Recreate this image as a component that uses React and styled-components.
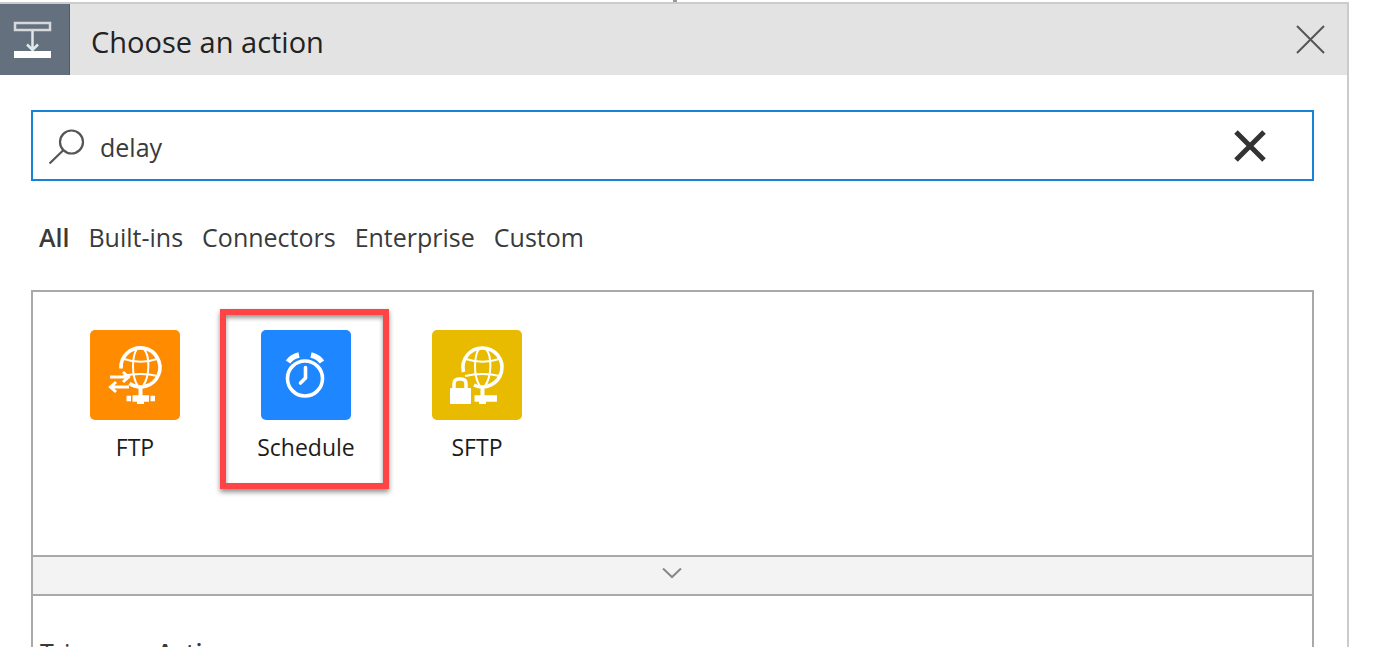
import React, { useState } from "react";
import styled, { createGlobalStyle } from "styled-components";

const GlobalStyle = createGlobalStyle`
  * { box-sizing: border-box; }
  body {
    margin: 0;
    height: 100vh;
    overflow: hidden;
    background: #fff;
    color: #3a3a3a;
    font-family: "Open Sans", "Noto Sans", sans-serif;
    font-size: 25px;
    line-height: 36px;
  }
  button, input { font: inherit; color: inherit; }
`;

const Page = styled.main`
  padding-right: 33px;
`;

const Connector = styled.div`
  width: 4px;
  height: 2px;
  margin: 0 auto;
  background: #999;
`;

const Card = styled.section`
  min-height: 100vh;
  border: solid #cbcbcb;
  border-width: 2px 2px 0 0;
`;

const Header = styled.header`
  display: flex;
  align-items: center;
  height: 71px;
  padding-right: 15px;
  background: #e3e3e3;
`;

const HeaderIcon = styled.div`
  width: 70px;
  height: 71px;
  flex: none;
  background: #64707d;
  border-right: 1px solid #535c66;
`;

const Title = styled.h1`
  flex: 1;
  margin: 0 0 0 21px;
  padding-top: 4px;
  color: #222;
  font-size: 29px;
  font-weight: 400;
  line-height: 40px;
`;

const IconButton = styled.button`
  display: grid;
  place-items: center;
  width: 44px;
  height: 44px;
  flex: none;
  padding: 0;
  border: 0;
  background: none;
  cursor: pointer;
`;

const Body = styled.div`
  padding: 35px 33px 0 31px;
`;

const SearchBox = styled.label`
  display: flex;
  align-items: center;
  height: 71px;
  padding: 0 40px 0 16px;
  border: 2px solid #1483d8;
`;

const SearchInput = styled.input`
  flex: 1;
  min-width: 0;
  height: 40px;
  margin: 2px 0 0 15px;
  padding: 0;
  border: 0;
  outline: 0;
  background: none;
`;

const Tabs = styled.nav`
  display: flex;
  gap: 19px;
  margin: 38px 0 35px;
  padding-left: 8px;
`;

const Tab = styled.button`
  padding: 0;
  border: 0;
  background: none;
  font-weight: ${(p) => (p.$active ? 600 : 400)};
  cursor: pointer;
`;

const Results = styled.div`
  border: 2px solid #a9a9a9;
  border-bottom: 0;
  min-height: 400px;
`;

const Tiles = styled.div`
  display: flex;
  gap: 1px;
  height: 263px;
  padding: 17px;
`;

const Tile = styled.button`
  position: relative;
  display: flex;
  flex-direction: column;
  align-items: center;
  gap: 9px;
  width: 170px;
  height: 180px;
  padding: 21px 0 0;
  border: 0;
  background: none;
  color: #1c1c1c;
  font-size: 23px;
  line-height: 36px;
  cursor: pointer;
`;

const TileIcon = styled.svg`
  width: 90px;
  height: 90px;
  flex: none;
  border-radius: 5px;
  background: ${(p) => p.$color};
`;

const Highlight = styled.span`
  position: absolute;
  inset: 0 2px 0 -1px;
  border: 6px solid #fe4444;
  box-shadow: 0 3px 5px rgba(0, 0, 0, 0.45), inset 0 3px 4px rgba(0, 0, 0, 0.4);
  pointer-events: none;
`;

const Expander = styled.button`
  display: grid;
  place-items: center;
  width: 100%;
  height: 41px;
  padding: 0 2px 5px 0;
  border: solid #a9a9a9;
  border-width: 2px 0;
  background: #f3f3f3;
  cursor: pointer;
`;

const KindTabs = styled.div`
  display: flex;
  gap: 23px;
  padding: 38px 0 0 7px;
`;

function StepGlyph() {
  return (
    <svg width="69" height="71" fill="none" aria-hidden="true">
      <rect x="15" y="19" width="35" height="7" stroke="#d5d9dd" strokeWidth="2.500" />
      <path d="M32.500 27V46M27 40.500L32.500 46L38 40.500" stroke="#e4e7ea" strokeWidth="2.500" />
      <rect x="14" y="47" width="37" height="7" fill="#fff" />
    </svg>
  );
}

function SearchGlyph() {
  return (
    <svg width="36" height="36" fill="none" stroke="#555" strokeWidth="2.200" aria-hidden="true">
      <circle cx="22.500" cy="14" r="11.500" />
      <path d="M14.500 22L0.500 35.500" />
    </svg>
  );
}

function Cross({ size, weight, color }) {
  return (
    <svg width={size} height={size} stroke={color} strokeWidth={weight} aria-hidden="true">
      <path d={`M2 2L${size - 2} ${size - 2}M${size - 2} 2L2 ${size - 2}`} />
    </svg>
  );
}

function GlobeLines() {
  return (
    <g strokeWidth="2">
      <path d="M47 19C42 26 41 46 48 56M54 19C60 26 60 46 53 56" />
      <path d="M34 29C44 32.500 57 32.500 67 29M33 46C44 43.500 57 43.500 68 46" />
    </g>
  );
}

function FtpGlyph() {
  return (
    <g fill="none" stroke="#fff" strokeWidth="3.600">
      <path d="M31 38.500A19.500 19.500 0 1 1 39.500 53.500" />
      <GlobeLines />
      <path d="M20 47H38M33 42L38.500 47L33 52M39 57H21M26 52L20.500 57L26 62" strokeWidth="3" />
      <path d="M50.500 57V66" strokeWidth="4" />
      <path d="M36.500 68.500H41M60.500 68.500H65" strokeWidth="5.500" />
      <path d="M42.500 68.500H59" strokeWidth="6.500" />
      <path d="M47 72.500H54" strokeWidth="3" />
    </g>
  );
}

function ScheduleGlyph() {
  return (
    <g fill="none" stroke="#fff" strokeWidth="3.600">
      <circle cx="44" cy="48.500" r="17.500" />
      <path d="M44.500 37.500V48L39.500 53" strokeLinecap="round" strokeLinejoin="round" />
      <path d="M27 32Q31 26.500 38 25M61 32Q57 26.500 50 25" strokeWidth="5.500" />
    </g>
  );
}

function SftpGlyph() {
  return (
    <g fill="none" stroke="#fff" strokeWidth="3.600">
      <path d="M31.500 42A19.500 19.500 0 1 1 42 55" />
      <GlobeLines />
      <path d="M50.500 57V66" strokeWidth="4" />
      <path d="M42.500 68.500H65" strokeWidth="6.500" />
      <path d="M47 72.500H54" strokeWidth="3" />
      <path d="M22 60V54Q22 49 27 49H29Q34 49 34 54V60" strokeWidth="3.500" />
      <rect x="18" y="58" width="21" height="16" rx="1" fill="#fff" stroke="none" />
    </g>
  );
}

const connectors = [
  { name: "FTP", color: "#ff8c00", Glyph: FtpGlyph },
  { name: "Schedule", color: "#1e86ff", Glyph: ScheduleGlyph, highlighted: true },
  { name: "SFTP", color: "#e8bb00", Glyph: SftpGlyph },
];

const categories = ["All", "Built-ins", "Connectors", "Enterprise", "Custom"];

export default function App() {
  const [query, setQuery] = useState("delay");
  const [category, setCategory] = useState("All");

  return (
    <Page>
      <GlobalStyle />
      <Connector />
      <Card>
        <Header>
          <HeaderIcon><StepGlyph /></HeaderIcon>
          <Title>Choose an action</Title>
          <IconButton aria-label="Close">
            <Cross size={31} weight={2} color="#555" />
          </IconButton>
        </Header>
        <Body>
          <SearchBox>
            <SearchGlyph />
            <SearchInput
              aria-label="Search connectors and actions"
              value={query}
              onChange={(e) => setQuery(e.target.value)}
            />
            <IconButton aria-label="Clear search" onClick={() => setQuery("")}>
              <Cross size={32} weight={5} color="#333" />
            </IconButton>
          </SearchBox>
          <Tabs>
            {categories.map((name) => (
              <Tab key={name} $active={name === category} onClick={() => setCategory(name)}>
                {name}
              </Tab>
            ))}
          </Tabs>
          <Results>
            <Tiles>
              {connectors.map(({ name, color, Glyph, highlighted }) => (
                <Tile key={name}>
                  <TileIcon $color={color} viewBox="0 0 90 90" aria-hidden="true">
                    <Glyph />
                  </TileIcon>
                  {name}
                  {highlighted && <Highlight />}
                </Tile>
              ))}
            </Tiles>
            <Expander aria-label="Show more connectors">
              <svg width="20" height="12" fill="none" stroke="#888" strokeWidth="2" aria-hidden="true">
                <path d="M1 1.500L10 10L19 1.500" />
              </svg>
            </Expander>
            <KindTabs>
              <Tab>Triggers</Tab>
              <Tab $active>Actions</Tab>
            </KindTabs>
          </Results>
        </Body>
      </Card>
    </Page>
  );
}
